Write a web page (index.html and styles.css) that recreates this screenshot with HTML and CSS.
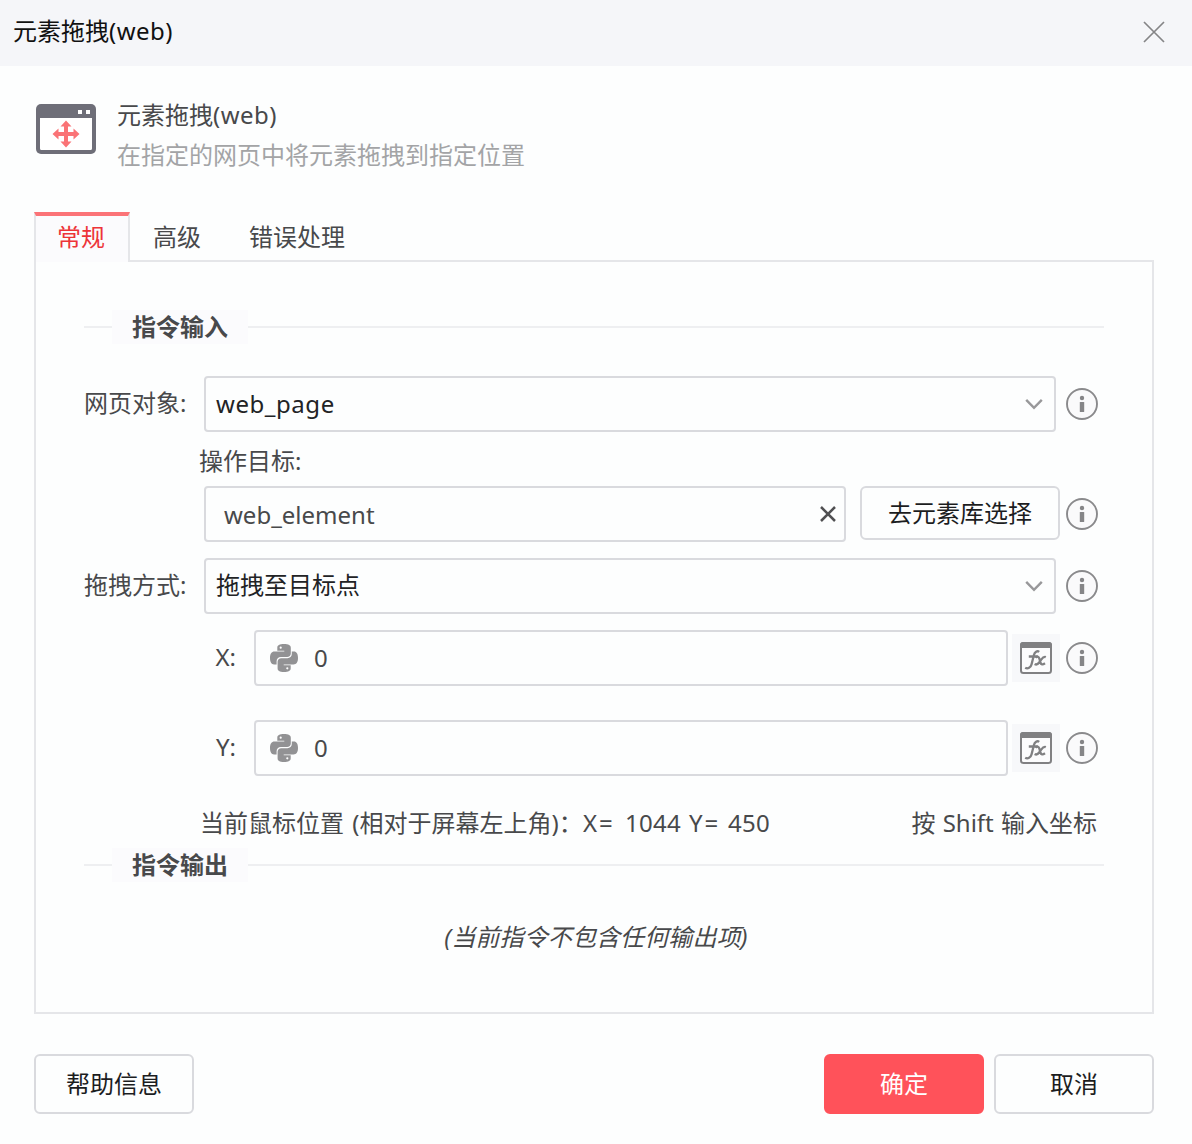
FILE: index.html
```
<!DOCTYPE html>
<html lang="zh-CN">
<head>
<meta charset="utf-8">
<title>元素拖拽(web)</title>
<link rel="stylesheet" href="styles.css">
</head>
<body>
<svg class="defs" width="0" height="0">
  <symbol id="info" viewBox="0 0 32 32">
    <circle cx="16" cy="16" r="15" fill="#fafafb" stroke="#8a8a8c" stroke-width="1.900"/>
    <circle cx="16" cy="10" r="2.200" fill="#858587"/>
    <rect x="13.800" y="14" width="4.400" height="10" rx=".6" fill="#858587"/>
  </symbol>
  <symbol id="fx" viewBox="0 0 32 32">
    <rect x="1" y="1" width="30" height="30" rx="2.500" fill="#fcfcfd" stroke="#808082" stroke-width="2"/>
    <path d="M0 6V3a3 3 0 0 1 3-3h26a3 3 0 0 1 3 3v3z" fill="#808082"/>
    <path d="M19.200 9.800c-2-1.500-4.500 .2-5.200 3L11.500 22.500c-.7 3-3.700 4.800-6.300 3.200M8.800 14.500h9" fill="none" stroke="#808082" stroke-width="2.300"/>
    <path d="M15.500 15.600c2-1.800 3.300-.9 3.900 1.200l1 3.600c.6 2.300 2.200 2.600 4.600.9M25.800 15.100c-2-1-3.200.6-4.600 2.600l-2 2.800c-1.300 1.800-2.500 2.700-4.600 1.500" fill="none" stroke="#808082" stroke-width="2.300"/>
  </symbol>
  <symbol id="python" viewBox="0 0 28 28">
    <path d="M14 0c-4.500 0-6.700 1.200-6.700 3.700v3h7v.9H4.500C1.500 7.600 0 10 0 14s1.500 6.400 4 6.400h2.600v-3c0-2.700 1.700-4.300 4.300-4.300h6.200c2.100 0 3.700-1.500 3.700-3.600V3.700C20.800 1.200 18.500 0 14 0z" fill="#929294"/>
    <path d="M14 28c4.500 0 6.700-1.200 6.700-3.700v-3h-7v-.9H23.500c3 0 4.500-2.400 4.500-6.400s-1.500-6.400-4-6.400h-2.200v2.500c0 2.500-1.900 4.100-4.300 4.100h-6.200c-2.100 0-3.700 1.500-3.700 3.600v6.500C7.600 26.800 9.500 28 14 28z" fill="#929294"/>
    <circle cx="10.700" cy="3.700" r="1.100" fill="#fff"/>
    <circle cx="17.300" cy="24.300" r="1.100" fill="#fff"/>
  </symbol>
  <symbol id="chevron" viewBox="0 0 18 12">
    <path d="M1.200 1.800 9 9.800l7.800-8" fill="none" stroke="#98989a" stroke-width="2.400"/>
  </symbol>
</svg>
<div class="dialog">
  <header class="titlebar">
    <span>元素拖拽<span class="web">(web)</span></span>
    <svg width="22" height="22" viewBox="0 0 22 22"><path d="M1 1l20 20M21 1 1 21" stroke="#858587" stroke-width="1.700"/></svg>
  </header>
  <section class="intro">
    <svg width="60" height="50" viewBox="0 0 60 50">
      <rect width="60" height="50" rx="5" fill="#6e6e78"/>
      <path d="M4 14h52v30.500a1.500 1.500 0 0 1-1.500 1.500h-49A1.500 1.500 0 0 1 4 44.500z" fill="#fff"/>
      <path d="M42 6h4v4h-4zM50 6h4v4h-4z" fill="#fff"/>
      <path d="M30 16.500l5.500 6H32V28h5.500v-3.500L43.500 30l-6 5.500V32H32v5.500h3.500L30 43.500l-5.500-6H28V32h-5.500v3.500L16.500 30l6-5.500V28H28v-5.500h-3.500z" fill="#fa7376"/>
    </svg>
    <div class="intro-text">
      <h1>元素拖拽<span class="web">(web)</span></h1>
      <p>在指定的网页中将元素拖拽到指定位置</p>
    </div>
  </section>
  <nav class="tabs">
    <span class="tab active">常规</span>
    <span class="tab">高级</span>
    <span class="tab">错误处理</span>
  </nav>
  <main class="panel">
    <h2 class="section"><span>指令输入</span></h2>
    <div class="row">
      <label class="label">网页对象:</label>
      <div class="field select"><span class="page-name">web_page</span><svg width="18" height="12"><use href="#chevron"/></svg></div>
      <svg class="info" width="32" height="32"><use href="#info"/></svg>
    </div>
    <div class="sublabel">操作目标:</div>
    <div class="row target">
      <div class="field element"><span>web_element</span><svg width="16" height="18" viewBox="0 0 16 18"><path d="M1 1l14 14M15 1 1 15" stroke="#505052" stroke-width="2.500"/></svg></div>
      <button class="btn pick">去元素库选择</button>
      <svg class="info" width="32" height="32"><use href="#info"/></svg>
    </div>
    <div class="row mode">
      <label class="label">拖拽方式:</label>
      <div class="field select"><span class="choice">拖拽至目标点</span><svg width="18" height="12"><use href="#chevron"/></svg></div>
      <svg class="info" width="32" height="32"><use href="#info"/></svg>
    </div>
    <div class="row coord">
      <label class="label">X:</label>
      <div class="field value"><svg width="28" height="28"><use href="#python"/></svg><span>0</span></div>
      <span class="fx"><svg width="32" height="32"><use href="#fx"/></svg></span>
      <svg class="info" width="32" height="32"><use href="#info"/></svg>
    </div>
    <div class="row coord second">
      <label class="label">Y:</label>
      <div class="field value"><svg width="28" height="28"><use href="#python"/></svg><span>0</span></div>
      <span class="fx"><svg width="32" height="32"><use href="#fx"/></svg></span>
      <svg class="info" width="32" height="32"><use href="#info"/></svg>
    </div>
    <div class="mouse">
      <span class="hint">当前鼠标位置 (相对于屏幕左上角)：</span>
      <span class="position"><span>X=</span><span>1044</span><span>Y=</span><span>450</span></span>
      <span class="shift">按 Shift 输入坐标</span>
    </div>
    <h2 class="section"><span>指令输出</span></h2>
    <p class="empty">(当前指令不包含任何输出项)</p>
  </main>
  <footer class="footer">
    <button class="btn">帮助信息</button>
    <button class="btn primary">确定</button>
    <button class="btn">取消</button>
  </footer>
</div>
</body>
</html>
```
FILE: styles.css
```
* { box-sizing: border-box; }
body {
  margin: 0;
  background: #fdfefe;
  color: #48494b;
  font: 24px/34px "Noto Sans", "Noto Sans CJK SC", sans-serif;
}
h1, h2, p { margin: 0; font-size: 24px; font-weight: 400; }
svg { display: block; flex: none; }
.defs { position: absolute; }
.dialog { width: 1192px; height: 1144px; overflow: hidden; white-space: nowrap; }
.titlebar {
  height: 66px;
  padding: 0 27px 2px 13px;
  display: flex;
  align-items: center;
  justify-content: space-between;
  background: #f5f6f9;
  color: #111;
}
.titlebar > span { padding-bottom: 2px; }
.web { letter-spacing: .5px; }
.intro { height: 146px; padding: 38px 36px 0; display: flex; gap: 22px; }
.intro-text { margin: -6px 0 0 -1px; }
.intro-text p { margin-top: 6px; color: #a3a4a6; }
.tabs { height: 48px; padding-left: 34px; display: flex; }
.tab { height: 48px; padding: 8px 24px 0; }
.tab:not(.active) { padding-left: 23px; padding-right: 25px; }
.tab.active {
  position: relative;
  height: 50px;
  padding: 4px 22px 0 21px;
  width: 96px;
  border: 2px solid #e5e6e9;
  border-top: 4px solid #fb7377;
  border-bottom: 0;
  background: #fbfbfd;
  color: #ed3439;
}
.panel {
  width: 1120px;
  height: 754px;
  margin-left: 34px;
  padding: 48px 48px 0;
  border: 2px solid #e5e6e9;
}
.section { display: flex; align-items: center; height: 34px; font-weight: 700; }
.section::before, .section::after { content: ""; height: 2px; background: #eeeff1; }
.section::before { width: 28px; }
.section::after { flex: 1; }
.section span { width: 136px; padding-left: 20px; background: #fbfbfd; }
.row { display: flex; align-items: center; height: 56px; }
.section + .row { margin-top: 32px; }
.label { width: 120px; padding-bottom: 2px; }
.field {
  height: 56px;
  display: flex;
  align-items: center;
  border: 2px solid #d9dade;
  border-radius: 4px;
  background: #fdfefe;
}
.select { width: 852px; padding: 0 11px 0 10px; justify-content: space-between; color: #222325; }
.page-name { letter-spacing: .55px; }
.choice { padding-bottom: 2px; }
.info { margin-left: 10px; }
.sublabel { height: 54px; padding: 12px 0 0 115px; }
.target { padding-left: 120px; }
.element { width: 642px; padding: 2px 8px 0 18px; justify-content: space-between; }
.btn {
  width: 160px;
  height: 60px;
  padding: 0;
  border: 2px solid #d9dade;
  border-radius: 6px;
  background: #fdfefe;
  color: #1c1d1f;
  font: inherit;
}
.pick { width: 200px; height: 54px; margin: 0 -4px 2px 14px; }
.mode { margin-top: 16px; }
.coord { margin-top: 16px; }
.coord.second { margin-top: 34px; }
.coord .label { width: 170px; padding-right: 18px; text-align: right; }
.value { width: 754px; padding-left: 14px; gap: 16px; }
.fx { margin-left: 4px; padding: 8px; background: #f7f8fa; }
.fx + .info { margin-left: 6px; }
.mouse { display: flex; height: 72px; padding: 30px 7px 0 116px; }
.hint { width: 383px; word-spacing: 2px; }
.position { display: grid; grid-template-columns: 42px 64px 39px auto; letter-spacing: .3px; }
.position span:nth-child(odd) { letter-spacing: 2px; }
.shift { margin-left: auto; word-spacing: 1px; }
.empty { margin: 38px -4px 0 0; text-align: center; font-style: italic; letter-spacing: .1px; }
.footer { display: flex; gap: 10px; padding: 40px 38px 0 34px; }
.footer .btn:first-child { margin-right: auto; }
.btn.primary { border-color: #ff525a; background: #ff525a; color: #fff; }
```
